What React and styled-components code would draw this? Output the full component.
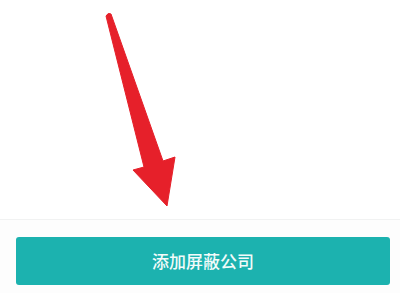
import React from 'react'
import styled, { createGlobalStyle } from 'styled-components'

const GlobalStyle = createGlobalStyle`
  html, body {
    margin: 0;
    padding: 0;
    background: #ffffff;
  }
`

const Page = styled.div`
  width: 400px;
  height: 293px;
  display: flex;
  flex-direction: column;
  background: #ffffff;
  font-family: "Noto Sans CJK SC", "Noto Sans", sans-serif;
  overflow: hidden;
`

const Content = styled.div`
  height: 219px;
  border-bottom: 1px solid #f1f2f2;
  position: relative;
`

const Footer = styled.div`
  flex: 1;
  padding: 17px 10px 0 16px;
  background: #fdfdfd;
`

const Button = styled.button`
  width: 100%;
  height: 48px;
  border: none;
  border-radius: 3px;
  background: #1cb2af;
  color: #f2fbfa;
  font-family: inherit;
  font-size: 17px;
  font-weight: 500;
  display: flex;
  align-items: center;
  justify-content: center;
  padding: 0 0 2px;
`

const Arrow = styled.svg`
  position: absolute;
  left: 0;
  top: 0;
`

export default function App() {
  return (
    <>
      <GlobalStyle />
      <Page>
        <Content>
          <Arrow width="400" height="219" viewBox="0 0 400 219">
            <path
              d="M106 16 Q108 12 111 14 L163 161 L175 157 L167 206 L133 170 L144 167 Z"
              fill="#e6202a"
              stroke="#e6202a"
              strokeWidth="1"
              strokeLinejoin="round"
            />
          </Arrow>
        </Content>
        <Footer>
          <Button>添加屏蔽公司</Button>
        </Footer>
      </Page>
    </>
  )
}
